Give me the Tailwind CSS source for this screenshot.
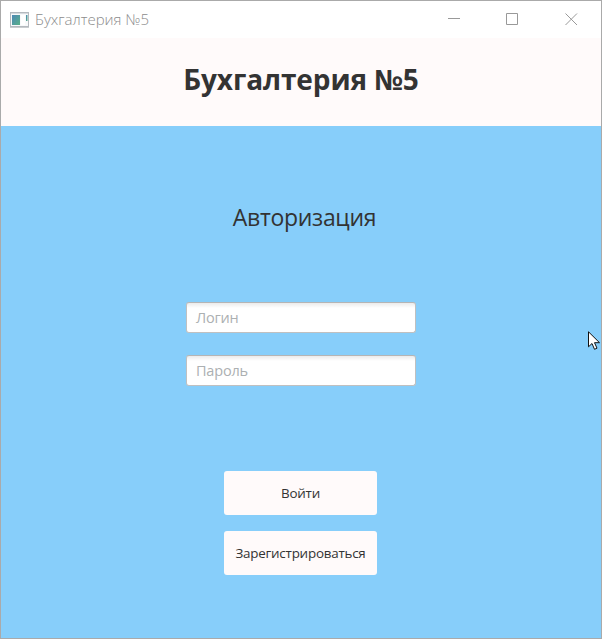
<!DOCTYPE html>
<html lang="ru">
<head>
<meta charset="utf-8">
<title>Бухгалтерия №5</title>
<script src="https://cdn.jsdelivr.net/npm/@tailwindcss/browser@4"></script>
</head>
<body class="font-['Open_Sans','Noto_Sans',sans-serif] text-[#333]">
<div class="relative flex h-[639px] w-[602px] flex-col overflow-hidden border border-[#aaa] bg-[#87cefa]">
  <div class="flex h-[37px] shrink-0 items-center bg-white pl-[9px] text-[#8c8c8c]">
    <svg class="shrink-0" width="19" height="16" viewBox="0 0 19 16">
      <defs><linearGradient id="g" x1="0" y1="0" x2="1" y2="1"><stop offset="0" stop-color="#4d88b5"/><stop offset="1" stop-color="#58b088"/></linearGradient></defs>
      <rect x=".5" y=".5" width="18" height="14" fill="#f8f9fa" stroke="#b4b9be"/>
      <path d="M0 15.5h19" stroke="#c9cccf"/><path d="M1 1.5h17" stroke="#d6dade"/>
      <rect x="2" y="3" width="8" height="10" fill="url(#g)"/>
      <rect x="11" y="3" width="4" height="10" fill="#fff"/>
      <rect x="16" y="3" width="1.500" height="6" fill="url(#g)"/>
    </svg>
    <span class="ml-[6px] whitespace-nowrap pb-[2px] text-[15px] leading-5 font-light">Бухгалтерия №5</span>
    <svg class="ml-auto mr-[23px] shrink-0" width="130" height="13" viewBox="0 0 130 13" fill="none" stroke="#999">
      <path d="M0 5.5h12M58.500 .5h11v11h-11zM117.500 .5l11.500 11.500M129 .5l-11.500 11.500"/>
    </svg>
  </div>
  <header class="flex h-[88px] shrink-0 items-center justify-center bg-[#fffafa] pb-[6px]">
    <h1 class="whitespace-nowrap text-[28px] leading-10 font-bold tracking-[-0.1px]">Бухгалтерия №5</h1>
  </header>
  <main class="flex flex-col items-center">
    <h2 class="mt-[75px] ml-[7px] whitespace-nowrap text-[23px] leading-8 tracking-[-0.3px]">Авторизация</h2>
    <div class="mt-[69px] flex flex-col gap-[22px] text-[14.500px] tracking-[-0.2px] text-[#acb0b2]">
      <div class="flex h-[31px] w-[230px] items-center rounded-[3px] border border-[#c0c0c0] border-t-[#b5b5b5] bg-white bg-linear-to-b from-[#ebebeb] to-white to-[5px] pl-[9px]">Логин</div>
      <div class="flex h-[31px] w-[230px] items-center rounded-[3px] border border-[#c0c0c0] border-t-[#b5b5b5] bg-white bg-linear-to-b from-[#ebebeb] to-white to-[5px] pl-[9px]">Пароль</div>
    </div>
    <div class="mt-[85px] mr-px flex flex-col gap-4 text-[13.400px] tracking-[-0.22px]">
      <button class="h-[44px] w-[153px] rounded-[3px] bg-[#fffafa] pt-px">Войти</button>
      <button class="h-[44px] w-[153px] rounded-[3px] bg-[#fffafa] pt-px whitespace-nowrap">Зарегистрироваться</button>
    </div>
  </main>
  <svg class="absolute left-[587px] top-[330px]" width="13" height="20" viewBox="0 0 13 20">
    <path d="M.5 .8v15l3.500-3.300 2.500 5.800 2.500-1.100-2.500-5.500h5z" fill="#fff" stroke="#111"/>
  </svg>
</div>
</body>
</html>
